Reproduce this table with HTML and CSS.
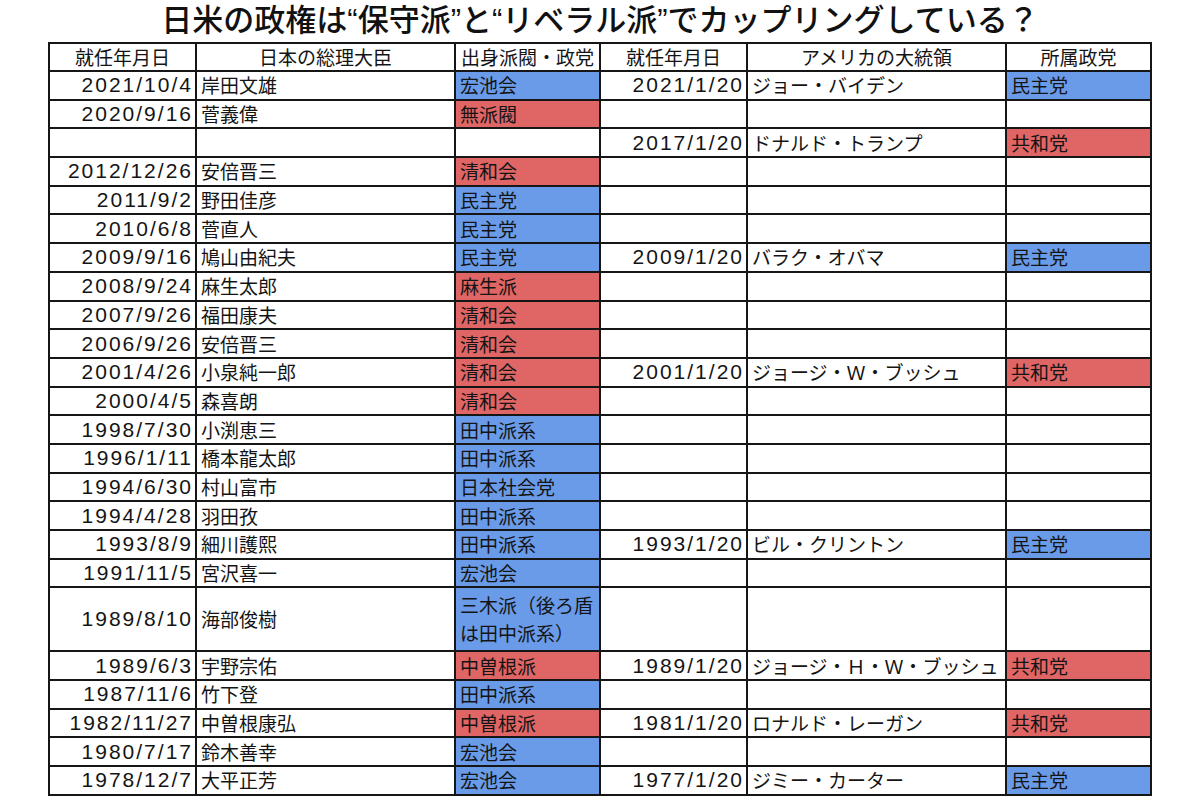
FILE: index.html
```html
<!DOCTYPE html>
<html lang="ja">
<head>
<meta charset="utf-8">
<title>日米の政権</title>
<link rel="stylesheet" href="styles.css">
</head>
<body>
<h1 class="title">日米の政権は“保守派”と“リベラル派”でカップリングしている？</h1>
<table class="grid">
<colgroup>
<col class="c-date"><col class="c-name"><col class="c-party">
<col class="c-date"><col class="c-name"><col class="c-party">
</colgroup>
<thead>
<tr><th>就任年月日</th><th>日本の総理大臣</th><th>出身派閥・政党</th><th>就任年月日</th><th>アメリカの大統領</th><th>所属政党</th></tr>
</thead>
<tbody>
<tr><td class="date">2021/10/4</td><td>岸田文雄</td><td class="blue">宏池会</td><td class="date">2021/1/20</td><td>ジョー・バイデン</td><td class="blue">民主党</td></tr>
<tr><td class="date">2020/9/16</td><td>菅義偉</td><td class="red">無派閥</td><td class="date"></td><td></td><td></td></tr>
<tr><td class="date"></td><td></td><td></td><td class="date">2017/1/20</td><td>ドナルド・トランプ</td><td class="red">共和党</td></tr>
<tr><td class="date">2012/12/26</td><td>安倍晋三</td><td class="red">清和会</td><td class="date"></td><td></td><td></td></tr>
<tr><td class="date">2011/9/2</td><td>野田佳彦</td><td class="blue">民主党</td><td class="date"></td><td></td><td></td></tr>
<tr><td class="date">2010/6/8</td><td>菅直人</td><td class="blue">民主党</td><td class="date"></td><td></td><td></td></tr>
<tr><td class="date">2009/9/16</td><td>鳩山由紀夫</td><td class="blue">民主党</td><td class="date">2009/1/20</td><td>バラク・オバマ</td><td class="blue">民主党</td></tr>
<tr><td class="date">2008/9/24</td><td>麻生太郎</td><td class="red">麻生派</td><td class="date"></td><td></td><td></td></tr>
<tr><td class="date">2007/9/26</td><td>福田康夫</td><td class="red">清和会</td><td class="date"></td><td></td><td></td></tr>
<tr><td class="date">2006/9/26</td><td>安倍晋三</td><td class="red">清和会</td><td class="date"></td><td></td><td></td></tr>
<tr><td class="date">2001/4/26</td><td>小泉純一郎</td><td class="red">清和会</td><td class="date">2001/1/20</td><td>ジョージ・Ｗ・ブッシュ</td><td class="red">共和党</td></tr>
<tr><td class="date">2000/4/5</td><td>森喜朗</td><td class="red">清和会</td><td class="date"></td><td></td><td></td></tr>
<tr><td class="date">1998/7/30</td><td>小渕恵三</td><td class="blue">田中派系</td><td class="date"></td><td></td><td></td></tr>
<tr><td class="date">1996/1/11</td><td>橋本龍太郎</td><td class="blue">田中派系</td><td class="date"></td><td></td><td></td></tr>
<tr><td class="date">1994/6/30</td><td>村山富市</td><td class="blue">日本社会党</td><td class="date"></td><td></td><td></td></tr>
<tr><td class="date">1994/4/28</td><td>羽田孜</td><td class="blue">田中派系</td><td class="date"></td><td></td><td></td></tr>
<tr><td class="date">1993/8/9</td><td>細川護熙</td><td class="blue">田中派系</td><td class="date">1993/1/20</td><td>ビル・クリントン</td><td class="blue">民主党</td></tr>
<tr><td class="date">1991/11/5</td><td>宮沢喜一</td><td class="blue">宏池会</td><td class="date"></td><td></td><td></td></tr>
<tr class="tall"><td class="date">1989/8/10</td><td>海部俊樹</td><td class="blue wrap">三木派（後ろ盾は田中派系）</td><td class="date"></td><td></td><td></td></tr>
<tr><td class="date">1989/6/3</td><td>宇野宗佑</td><td class="red">中曽根派</td><td class="date">1989/1/20</td><td>ジョージ・Ｈ・Ｗ・ブッシュ</td><td class="red">共和党</td></tr>
<tr><td class="date">1987/11/6</td><td>竹下登</td><td class="blue">田中派系</td><td class="date"></td><td></td><td></td></tr>
<tr><td class="date">1982/11/27</td><td>中曽根康弘</td><td class="red">中曽根派</td><td class="date">1981/1/20</td><td>ロナルド・レーガン</td><td class="red">共和党</td></tr>
<tr><td class="date">1980/7/17</td><td>鈴木善幸</td><td class="blue">宏池会</td><td class="date"></td><td></td><td></td></tr>
<tr><td class="date">1978/12/7</td><td>大平正芳</td><td class="blue">宏池会</td><td class="date">1977/1/20</td><td>ジミー・カーター</td><td class="blue">民主党</td></tr>
</tbody>
</table>
</body>
</html>
```
FILE: styles.css
```css
html, body {
  margin: 0;
  padding: 0;
  background: #ffffff;
}

body {
  width: 1200px;
  height: 800px;
  overflow: hidden;
  font-family: "Noto Sans CJK JP", sans-serif;
  color: #141414;
}

.title {
  margin: 0;
  height: 42px;
  line-height: 42px;
  font-size: 31px;
  font-weight: 500;
  text-align: center;
  font-family: "Liberation Sans", "Noto Sans CJK JP", sans-serif;
  color: #111;
}

.grid {
  margin-left: 48px;
  width: 1102px;
  table-layout: fixed;
  border-collapse: collapse;
  border: 2px solid #161616;
  font-size: 19px;
  line-height: 24px;
}

.c-date { width: 147px; }
.c-name { width: 259px; }
.c-party { width: 145px; }

.grid th,
.grid td {
  border: 2px solid #161616;
  padding: 0 4px;
  vertical-align: middle;
  white-space: nowrap;
  overflow: hidden;
}

.grid th {
  font-weight: 400;
  text-align: center;
}

.grid thead tr {
  height: 28px;
}

.grid tbody tr {
  height: 28.7px;
}

.grid tbody tr.tall {
  height: 64px;
}

.grid td {
  text-align: left;
}

.grid td.date {
  text-align: right;
  padding-right: 2px;
  font-family: "Liberation Sans", sans-serif;
  font-size: 21px;
  letter-spacing: 2px;
}

.grid td.wrap {
  white-space: normal;
  line-height: 28px;
}

.blue {
  background: #6a9be8;
}

.red {
  background: #e06565;
}
```
